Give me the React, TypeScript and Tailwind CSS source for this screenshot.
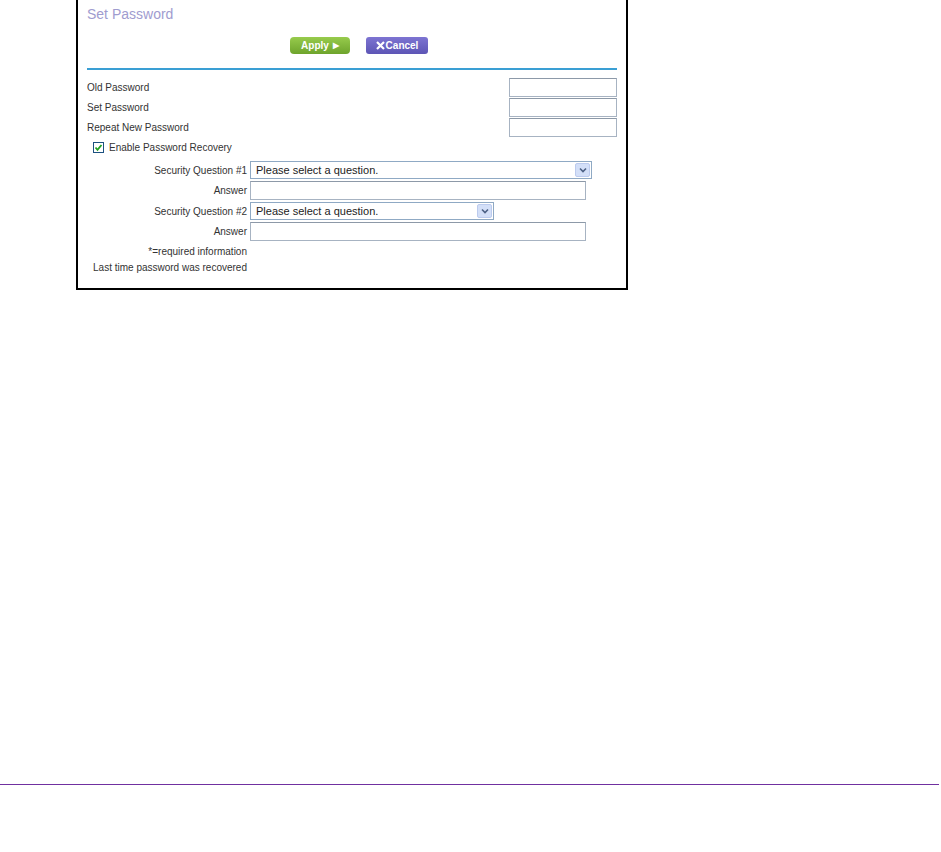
import React from "react";

const font = { fontFamily: '"Liberation Sans", Arial, sans-serif' };

function TextInput({ w }: { w: string }) {
  return <div className={`${w} h-[19px] border border-[#a7b3c2] border-t-[#8d99a8] bg-white`} />;
}

function Select({ w }: { w: string }) {
  return (
    <div className={`${w} h-[18px] border border-[#8fa9c4] bg-white flex items-center`}>
      <span className="flex-1 pl-[5px] text-[11px] text-[#222]">Please select a question.</span>
      <div className="w-[15px] h-[14px] mr-[1px] rounded-[2px] bg-[#d3dff8] border border-[#bccbee] flex items-center justify-center">
        <svg width="8" height="6" viewBox="0 0 8 6">
          <path d="M1 1.5 L4 4.5 L7 1.5" fill="none" stroke="#4d6185" strokeWidth="1.6" />
        </svg>
      </div>
    </div>
  );
}

function SecRow({ label, h, children }: { label: string; h: string; children: React.ReactNode }) {
  return (
    <div className={`flex items-center ${h}`}>
      <div className="w-[163px] text-right pr-[3px] text-[10px] text-[#333]">{label}</div>
      {children}
    </div>
  );
}

export default function App() {
  return (
    <div className="w-[941px] h-[852px] bg-white" style={font}>
      <div className="ml-[76px] w-[552px] h-[290px] border-2 border-t-0 border-black px-[9px]">
        <div className="h-[30px] pt-[5px] text-[14px] leading-[18px] text-[#a09ccf]">Set Password</div>

        <div className="mt-[7px] h-[17px] flex pl-[203px] gap-[16px]">
          <div className="w-[60px] h-[17px] rounded-[4px] bg-gradient-to-b from-[#97cb4c] to-[#6ea42c] flex items-center justify-center text-white text-[10px] font-bold">
            Apply <span className="ml-[4px] text-[8px]">▶</span>
          </div>
          <div className="w-[62px] h-[17px] rounded-[3px] bg-gradient-to-b from-[#7d74d2] to-[#5d55b5] flex items-center justify-center text-white text-[10px] font-bold">
            <svg width="9" height="9" viewBox="0 0 9 9" className="mr-[1px]">
              <path d="M1 1 L8 8 M8 1 L1 8" stroke="white" strokeWidth="2.2" />
            </svg>
            Cancel
          </div>
        </div>

        <div className="mt-[14px] h-[2px] bg-[#3a9fd4]" />

        <div className="mt-[7px] text-[10px] text-[#333]">
          {["Old Password", "Set Password", "Repeat New Password"].map((l) => (
            <div key={l} className="flex items-center justify-between h-[20px]">
              <span>{l}</span>
              <TextInput w="w-[108px]" />
            </div>
          ))}
        </div>

        <div className="flex items-center h-[20px] pl-[6px] text-[10px] text-[#333]">
          <div className="w-[11px] h-[11px] border border-[#1c5180] bg-white flex items-center justify-center">
            <svg width="9" height="9" viewBox="0 0 9 9">
              <path d="M1.5 4.5 L3.5 6.8 L7.5 2" fill="none" stroke="#21a121" strokeWidth="1.8" />
            </svg>
          </div>
          <span className="ml-[5px]">Enable Password Recovery</span>
        </div>

        <div className="mt-[3px]">
          <SecRow label="Security Question #1" h="h-[20px]">
            <Select w="w-[342px]" />
          </SecRow>
          <SecRow label="Answer" h="h-[21px]">
            <TextInput w="w-[336px]" />
          </SecRow>
          <SecRow label="Security Question #2" h="h-[20px]">
            <Select w="w-[244px]" />
          </SecRow>
          <SecRow label="Answer" h="h-[21px]">
            <TextInput w="w-[336px]" />
          </SecRow>
          <div className="mt-[1px] h-[16px] flex items-center">
            <div className="w-[163px] text-right pr-[3px] text-[10px] text-[#333]">*=required information</div>
          </div>
          <div className="h-[16px] flex items-center">
            <div className="w-[163px] text-right pr-[3px] text-[10px] text-[#333] whitespace-nowrap">Last time password was recovered</div>
          </div>
        </div>
      </div>

      <div className="mt-[494px] w-[939px] h-[1px] bg-[#7030a0]" />
    </div>
  );
}
